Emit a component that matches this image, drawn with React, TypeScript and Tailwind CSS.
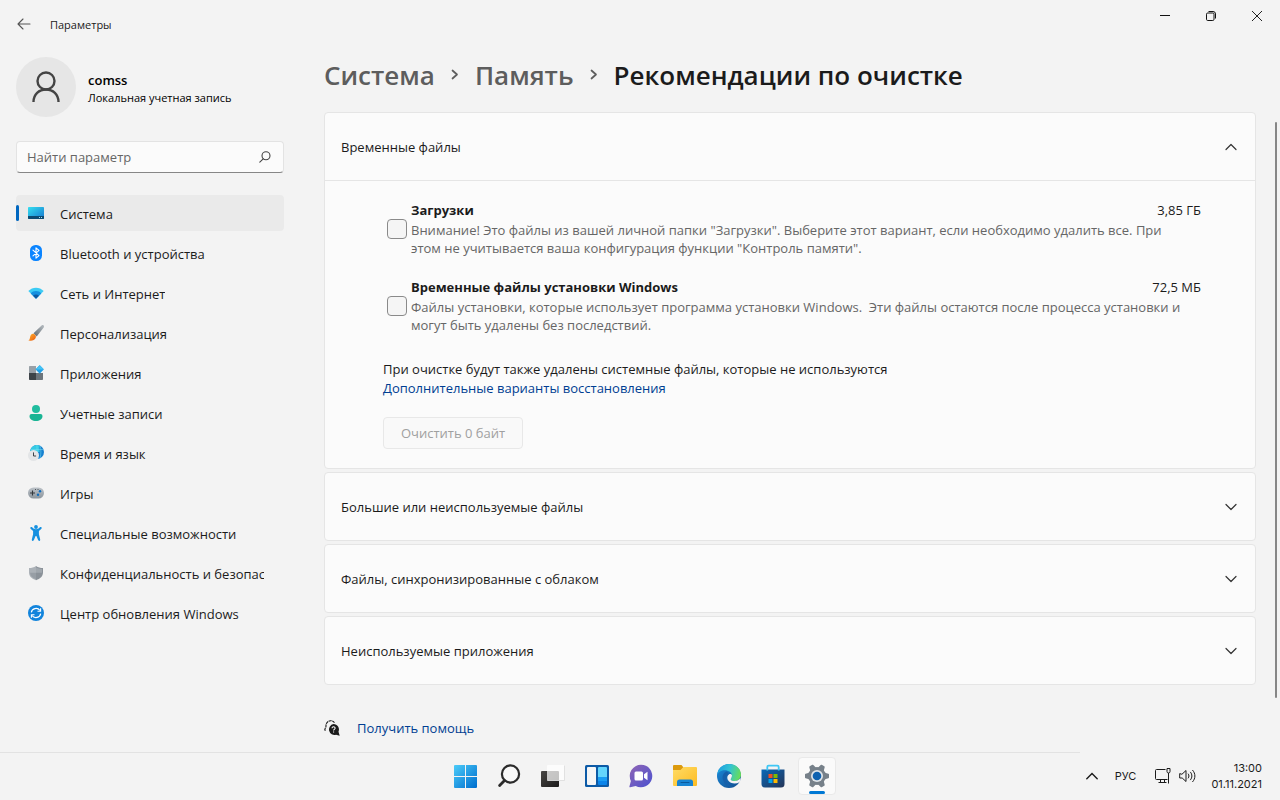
import { useState, ReactNode } from 'react';

interface NavItem {
  label: string;
  icon: ReactNode;
}

function Chevron({ up = false }: { up?: boolean }) {
  return (
    <svg width="12" height="12" viewBox="0 0 12 12" fill="none" stroke="#333" strokeWidth="1.2" strokeLinecap="round" strokeLinejoin="round">
      <path d={up ? 'M1 8.5 6 3.5l5 5' : 'M1 3.5l5 5 5-5'} />
    </svg>
  );
}

function CrumbArrow() {
  return (
    <svg width="8" height="12" viewBox="0 0 8 12" fill="none" stroke="#5d5d5d" strokeWidth="1.7" strokeLinecap="round" strokeLinejoin="round">
      <path d="M1.5 1.5 6 5.500l-4.500 4" />
    </svg>
  );
}

const NAV: NavItem[] = [
  {
    label: 'Система',
    icon: (
      <svg width="16" height="16" viewBox="0 0 16 16">
        <defs>
          <linearGradient id="sys" x1="0" y1="0" x2="1" y2="1">
            <stop offset="0" stopColor="#35dff0" />
            <stop offset="1" stopColor="#1676cf" />
          </linearGradient>
        </defs>
        <rect y="2" width="16" height="12" rx="0.8" fill="url(#sys)" />
        <path d="M0 11h16v2.2a.8.8 0 0 1-.8.8H.8a.8.8 0 0 1-.8-.8z" fill="#0d4a72" />
        <path d="M11 12h1v1h-1zM13 12h1v1h-1z" fill="#9fe3f5" />
      </svg>
    ),
  },
  {
    label: 'Bluetooth и устройства',
    icon: (
      <svg width="16" height="16" viewBox="0 0 16 16">
        <rect x="2" width="12" height="16" rx="5.5" fill="#0a84ff" />
        <path d="M5 5.2 11 10.6 8 13.2V2.8l3 2.6L5 10.8" fill="none" stroke="#fff" strokeWidth="1.1" strokeLinejoin="round" strokeLinecap="round" />
      </svg>
    ),
  },
  {
    label: 'Сеть и Интернет',
    icon: (
      <svg width="16" height="16" viewBox="0 0 16 16">
        <path d="M.3 6C4.500 1.500 11.500 1.500 15.700 6L8 13.700z" fill="#3ccbf4" />
        <path d="M2.700 8.400C5.500 5.300 10.500 5.300 13.300 8.400L8 13.700z" fill="#1590df" />
        <path d="M5 10.700c1.600-1.700 4.400-1.700 6 0l-3 3z" fill="#0c59a4" />
      </svg>
    ),
  },
  {
    label: 'Персонализация',
    icon: (
      <svg width="16" height="16" viewBox="0 0 16 16">
        <defs>
          <linearGradient id="brush" x1="0" y1="1" x2="1" y2="0">
            <stop offset="0" stopColor="#5f6970" />
            <stop offset="1" stopColor="#b8bec3" />
          </linearGradient>
          <linearGradient id="paint" x1="0" y1="0" x2="1" y2="1">
            <stop offset="0" stopColor="#ffb52b" />
            <stop offset="1" stopColor="#ea5a12" />
          </linearGradient>
        </defs>
        <path d="M15.600.4c.6.600.5 1.300.1 2L8.700 11.500 5.500 8.200 13.600.500c.6-.5 1.500-.6 2-.1z" fill="url(#brush)" />
        <path d="M5 8.800c1.200-.2 3 1.400 2.900 2.900-.2 3-3.700 4.500-7.700 3.900 1.600-.9 1.500-2 1.900-3.700.4-1.700 1.300-2.900 2.900-3.100z" fill="url(#paint)" />
      </svg>
    ),
  },
  {
    label: 'Приложения',
    icon: (
      <svg width="16" height="16" viewBox="0 0 16 16">
        <path d="M1.800 1H8v7H1V1.800A.8.800 0 0 1 1.800 1z" fill="#98a0a7" />
        <path d="M1 8h7v7H1.800a.8.800 0 0 1-.8-.8z" fill="#3d4348" />
        <path d="M8 8h7v6.200a.8.800 0 0 1-.8.800H8z" fill="#6c757c" />
        <rect x="8.700" y="1.400" width="6" height="6" rx=".6" transform="rotate(45 11.700 4.400)" fill="#1e9fe8" />
        <path d="M11.700.2 15.900 4.400H7.500z" fill="#43c3f5" />
      </svg>
    ),
  },
  {
    label: 'Учетные записи',
    icon: (
      <svg width="16" height="16" viewBox="0 0 16 16">
        <circle cx="8" cy="4" r="4" fill="#21bd9f" />
        <path d="M3.500 9h9A2 2 0 0 1 14.500 11c0 3.300-3 5-6.500 5s-6.500-1.700-6.500-5a2 2 0 0 1 2-2z" fill="#19b494" />
      </svg>
    ),
  },
  {
    label: 'Время и язык',
    icon: (
      <svg width="16" height="16" viewBox="0 0 16 16">
        <circle cx="9" cy="7" r="7" fill="#1680cf" />
        <path d="M9 0a7 7 0 0 0-7 7h9.500V.5A7 7 0 0 0 9 0z" fill="#35cbe4" />
        <path d="M2.500 4.500h13M9 0v8M12 .6c1.200 4 1.200 8 0 12.500" fill="none" stroke="#7be1f2" strokeWidth=".5" />
        <circle cx="5.500" cy="10.500" r="5.500" fill="#e3e5e7" />
        <path d="M5.500 7.400v3.600h2.600" fill="none" stroke="#3d4247" strokeWidth="1" />
      </svg>
    ),
  },
  {
    label: 'Игры',
    icon: (
      <svg width="16" height="16" viewBox="0 0 16 16">
        <defs>
          <linearGradient id="pad" x1="0" y1="0" x2="0" y2="1">
            <stop offset="0" stopColor="#bcc2c8" />
            <stop offset="1" stopColor="#8c959d" />
          </linearGradient>
        </defs>
        <rect y="2.500" width="16" height="11" rx="5.500" fill="url(#pad)" />
        <path d="M4.500 5.500v5M2 8h5" stroke="#32373c" strokeWidth="1.100" />
        <path d="M7 4h1v1H7zM9.500 4h1v1h-1z" fill="#50585f" />
        <circle cx="12" cy="6.300" r="1.200" fill="#0f6cbd" />
        <circle cx="10" cy="9.700" r="1.200" fill="#0f6cbd" />
      </svg>
    ),
  },
  {
    label: 'Специальные возможности',
    icon: (
      <svg width="16" height="16" viewBox="0 0 16 16" fill="#1590e0">
        <circle cx="8" cy="2" r="1.900" />
        <path d="M2.400 2.400c.5-.7 1.100-.6 1.700-.2C5.200 3.300 6.400 4.200 8 4.200s2.800-.9 3.900-2c.6-.4 1.200-.5 1.700.2.3.6.1 1.100-.4 1.500l-2.300 2v3.300l1.300 5.300c.1.700-.2 1.200-.8 1.400-.7.100-1.100-.2-1.300-.8L8.400 11h-.8l-1.700 4.100c-.2.600-.6.900-1.300.8-.6-.2-.9-.7-.8-1.400l1.300-5.300V5.900l-2.300-2c-.5-.4-.7-.9-.4-1.500z" />
      </svg>
    ),
  },
  {
    label: 'Конфиденциальность и безопасность',
    icon: (
      <svg width="16" height="16" viewBox="0 0 16 16">
        <path d="M8 1c2 1.500 4.500 2 7 2v4.500c0 3.700-2.700 6.200-7 7.700z" fill="#8b9299" />
        <path d="M8 1C6 2.500 3.500 3 1 3v4.500c0 3.700 2.700 6.200 7 7.700z" fill="#abb1b7" />
        <path d="M8 2.300c1.800 1.200 3.800 1.600 6 1.700v3.800H8z" fill="#a0a7ad" />
        <path d="M8 7.800H2C2.200 11 4.500 13 8 14.200z" fill="#979ea5" />
      </svg>
    ),
  },
  {
    label: 'Центр обновления Windows',
    icon: (
      <svg width="16" height="16" viewBox="0 0 16 16">
        <circle cx="8" cy="8" r="8" fill="#1284dc" />
        <path d="M3.300 7.300C3.900 3.300 9.500 2 12 5.500M12.700 8.700C12.100 12.700 6.500 14 4 10.500" fill="none" stroke="#fff" strokeWidth="1.200" />
        <path d="M12.600 3.200v3H9.500M3.400 12.800v-3h3.100" fill="none" stroke="#fff" strokeWidth="1.100" />
      </svg>
    ),
  },
];

const FILES = [
  {
    id: 'downloads',
    title: 'Загрузки',
    size: '3,85 ГБ',
    text: 'Внимание! Это файлы из вашей личной папки "Загрузки". Выберите этот вариант, если необходимо удалить все. При этом не учитывается ваша конфигурация функции "Контроль памяти".',
  },
  {
    id: 'setup',
    title: 'Временные файлы установки Windows',
    size: '72,5 МБ',
    text: 'Файлы установки, которые использует программа установки Windows.\u00a0 Эти файлы остаются после процесса установки и могут быть удалены без последствий.',
  },
];

const SECTIONS = ['Большие или неиспользуемые файлы', 'Файлы, синхронизированные с облаком', 'Неиспользуемые приложения'];

const TASKS: NavItem[] = [
  {
    label: 'Пуск',
    icon: (
      <svg width="24" height="24" viewBox="0 0 24 24">
        <defs>
          <linearGradient id="win" x1="0" y1="0" x2="23" y2="23" gradientUnits="userSpaceOnUse">
            <stop offset="0" stopColor="#4fd0fb" />
            <stop offset="1" stopColor="#0070cf" />
          </linearGradient>
        </defs>
        <path d="M1 2a1 1 0 0 1 1-1h10v11H1zM13 1h10a1 1 0 0 1 1 1v10H13zM1 13h11v11H2a1 1 0 0 1-1-1zM13 13h11v10a1 1 0 0 1-1 1H13z" fill="url(#win)" />
      </svg>
    ),
  },
  {
    label: 'Поиск',
    icon: (
      <svg width="24" height="24" viewBox="0 0 24 24" fill="none" stroke="#2b2b2b" strokeLinecap="round">
        <circle cx="13.500" cy="10" r="8.600" strokeWidth="2.200" fill="#f8f8f8" />
        <path d="M7.500 16.500 2.600 21.500" strokeWidth="2.800" />
      </svg>
    ),
  },
  {
    label: 'Представление задач',
    icon: (
      <svg width="24" height="24" viewBox="0 0 24 24">
        <defs>
          <linearGradient id="dark" x1="0" y1="0" x2="1" y2="1">
            <stop offset="0" stopColor="#474543" />
            <stop offset="1" stopColor="#1c1b1a" />
          </linearGradient>
        </defs>
        <rect x="0" y="7" width="18" height="16" rx="1" fill="url(#dark)" />
        <rect x="6" y="1" width="18" height="16" rx="1" fill="#fff" fillOpacity=".72" />
        <path d="M6.500 16.500h17v-15" fill="none" stroke="#d5d5d5" strokeWidth=".7" />
      </svg>
    ),
  },
  {
    label: 'Виджеты',
    icon: (
      <svg width="24" height="24" viewBox="0 0 24 24">
        <rect y="1" width="24" height="22" rx="1.500" fill="#0c5aa6" />
        <rect x="2" y="3" width="9" height="18" rx="1" fill="#f4f5f6" />
        <path d="M13 4a1 1 0 0 1 1-1h7a1 1 0 0 1 1 1v9h-9z" fill="#63d5fd" />
        <path d="M13 13h9v4h-9z" fill="#199df4" />
        <path d="M13 17h9v3a1 1 0 0 1-1 1h-7a1 1 0 0 1-1-1z" fill="#0a84ea" />
      </svg>
    ),
  },
  {
    label: 'Чат',
    icon: (
      <svg width="24" height="24" viewBox="0 0 24 24">
        <defs>
          <linearGradient id="chat" x1="0" y1="0" x2="1" y2="1">
            <stop offset="0" stopColor="#9166b5" />
            <stop offset="1" stopColor="#4a50cf" />
          </linearGradient>
        </defs>
        <path d="M12 .7a11.300 11.300 0 1 1-5.300 21.300L1.200 23.300c-.6.1-.9-.3-.8-.8L1.900 17A11.300 11.300 0 0 1 12 .7z" fill="url(#chat)" />
        <rect x="5.500" y="7.500" width="8.500" height="9" rx="1.500" fill="#fff" />
        <path d="M15 10.300 18.500 7.700v8.600L15 13.700z" fill="#fff" />
      </svg>
    ),
  },
  {
    label: 'Проводник',
    icon: (
      <svg width="24" height="24" viewBox="0 0 24 24">
        <defs>
          <linearGradient id="folder" x1="0" y1="0" x2="1" y2="1">
            <stop offset="0" stopColor="#ffdc66" />
            <stop offset="1" stopColor="#fdbb22" />
          </linearGradient>
        </defs>
        <path d="M0 2a1 1 0 0 1 1-1h7.500l2 2.500L8 7H0z" fill="#dc9a0d" />
        <path d="M0 6h7.500l3-3H23a1 1 0 0 1 1 1v17a1 1 0 0 1-1 1H1a1 1 0 0 1-1-1z" fill="url(#folder)" />
        <path d="M4 18a2.500 2.500 0 0 1 2.500-2.500h11A2.500 2.500 0 0 1 20 18v4H4z" fill="#1784d3" />
        <path d="M8 18.500h8" stroke="#0a599c" strokeLinecap="round" />
      </svg>
    ),
  },
  {
    label: 'Microsoft Edge',
    icon: (
      <svg width="24" height="24" viewBox="0 0 24 24">
        <defs>
          <linearGradient id="edgeTop" x1="0" y1=".3" x2="1" y2=".5">
            <stop offset="0" stopColor="#1b9de0" />
            <stop offset=".5" stopColor="#32c3d4" />
            <stop offset="1" stopColor="#68dd58" />
          </linearGradient>
          <linearGradient id="edgeLow" x1="0" y1="0" x2="1" y2="1">
            <stop offset="0" stopColor="#1b8dde" />
            <stop offset="1" stopColor="#114a8b" />
          </linearGradient>
        </defs>
        <circle cx="12" cy="12" r="12" fill="url(#edgeLow)" />
        <path d="M0 11.500C.5 5 5.500 0 12 0c7 0 12 5 12 10.500 0 4-3 6.500-6.500 6.500-3.300 0-4.200-1.300-3.600-2.200.7-.9 1.100-1.700 1.100-2.800C15 8.500 11.500 6.300 7.700 6.300 3.500 6.300.5 9 0 11.500z" fill="url(#edgeTop)" />
        <path d="M9.500 7.500C6 9 4.500 13 6.500 17c1.800 4 5.500 6 9 6.300C9 20 7.500 13 12 10.500c0 0-.8-2.300-2.500-3z" fill="#1660aa" />
        <path d="M15 11.500c0 1.300-.4 2.400-1.100 3.300-.6.900.3 2.200 3.600 2.200 2.500 0 4.700-1.200 5.900-3 .4 1.600-.3 3.500-.9 4.200-1.500.8-3.200 1.200-5 1.200-4 0-7.200-2.700-7.200-5.700 0-1.700.9-3 2.200-3.700 1.500-.3 2.500.5 2.500 1.500z" fill="#f3f3f3" />
      </svg>
    ),
  },
  {
    label: 'Microsoft Store',
    icon: (
      <svg width="24" height="24" viewBox="0 0 24 24">
        <defs>
          <linearGradient id="store" x1="0" y1="0" x2="1" y2="1">
            <stop offset="0" stopColor="#0968b8" />
            <stop offset="1" stopColor="#243456" />
          </linearGradient>
        </defs>
        <path d="M.5 5.500h23V20a3.500 3.500 0 0 1-3.500 3.500H4A3.500 3.500 0 0 1 .5 20z" fill="url(#store)" />
        <path d="M6.300 6.500V3a1.300 1.300 0 0 1 1.300-1.300h8.800A1.300 1.300 0 0 1 17.700 3v3.500" fill="none" stroke="#3fc7f5" strokeWidth="1.800" />
        <path d="M7.500 10h4v4h-4z" fill="#f25022" />
        <path d="M12.500 10h4v4h-4z" fill="#7fba00" />
        <path d="M7.500 15h4v4h-4z" fill="#00a4ef" />
        <path d="M12.500 15h4v4h-4z" fill="#ffb900" />
      </svg>
    ),
  },
  {
    label: 'Параметры',
    icon: (
      <svg width="24" height="24" viewBox="0 0 24 24">
        <g fill="#77818a">
          <circle cx="12" cy="12" r="9" />
          <path d="M5 8.500.6 9.700a.8.800 0 0 0-.6.800v3a.8.800 0 0 0 .6.800L5 15.500zM19 8.500l4.400 1.200a.8.800 0 0 1 .6.800v3a.8.800 0 0 1-.6.800L19 15.500z" />
          <path d="M5 8.500.6 9.700a.8.800 0 0 0-.6.800v3a.8.800 0 0 0 .6.800L5 15.500zM19 8.500l4.400 1.200a.8.800 0 0 1 .6.800v3a.8.800 0 0 1-.6.800L19 15.500z" transform="rotate(60 12 12)" />
          <path d="M5 8.500.6 9.700a.8.800 0 0 0-.6.800v3a.8.800 0 0 0 .6.800L5 15.500zM19 8.500l4.400 1.200a.8.800 0 0 1 .6.800v3a.8.800 0 0 1-.6.800L19 15.500z" transform="rotate(120 12 12)" />
        </g>
        <circle cx="12" cy="12" r="6" fill="#dfe4e8" />
        <circle cx="12" cy="12" r="4.300" fill="#0f62b0" />
      </svg>
    ),
  },
];

export default function App() {
  const [open, setOpen] = useState(true);
  const [checked, setChecked] = useState<string[]>([]);

  function toggle(id: string) {
    setChecked(c => (c.includes(id) ? c.filter(x => x !== id) : [...c, id]));
  }

  return (
    <div className="min-h-screen flex flex-col bg-[#f3f3f3] text-[#1b1b1b] text-[13px] leading-5 font-['Open_Sans','Noto_Sans',sans-serif]">
      <header className="h-12 flex items-start justify-between">
        <div className="h-12 flex items-center pl-3">
          <button type="button" aria-label="Назад" className="w-6 h-6 grid place-items-center">
            <svg width="14" height="12" viewBox="0 0 14 12" fill="none" stroke="#555" strokeWidth="1.1" strokeLinecap="round" strokeLinejoin="round">
              <path d="M1 6h12M6 1 1 6l5 5" />
            </svg>
          </button>
          <span className="ml-[14px] pt-0.5 text-[11px]">Параметры</span>
        </div>
        <div className="flex">
          <button type="button" aria-label="Свернуть" className="w-[46px] h-8 grid place-items-center hover:bg-black/5">
            <svg width="10" height="10" viewBox="0 0 10 10" stroke="#111"><path d="M0 4.500h10" /></svg>
          </button>
          <button type="button" aria-label="Восстановить" className="w-[46px] h-8 grid place-items-center hover:bg-black/5">
            <svg width="10" height="10" viewBox="0 0 10 10" fill="none" stroke="#111">
              <rect x=".5" y="2" width="7.500" height="7.500" rx="1.200" />
              <path d="M2.500.5H7a2.500 2.500 0 0 1 2.500 2.500v4.500" />
            </svg>
          </button>
          <button type="button" aria-label="Закрыть" className="w-[46px] h-8 grid place-items-center hover:bg-black/5">
            <svg width="10" height="10" viewBox="0 0 10 10" stroke="#222"><path d="M0 0l10 10M10 0 0 10" /></svg>
          </button>
        </div>
      </header>

      <div className="flex-1 flex">
        <aside className="w-[300px] shrink-0 px-4 pt-[9px]">
          <div className="flex items-center gap-3">
            <div className="size-[60px] rounded-full bg-[#e6e6e6] grid place-items-center">
              <svg width="28" height="32" viewBox="0 0 28 32" fill="none" stroke="#444" strokeWidth="2.400">
                <circle cx="14" cy="10" r="8.500" />
                <path d="M1.500 31C1.500 23.500 7 18.500 14 18.500S26.500 23.500 26.500 31" />
              </svg>
            </div>
            <div className="pt-[3px] text-black">
              <div className="text-[13px] leading-[18px] font-semibold">comss</div>
              <div className="text-[11px] leading-[18px]">Локальная учетная запись</div>
            </div>
          </div>

          <div className="mt-6 h-8 flex items-center rounded-[4px] border border-[#e3e3e3] border-b-[#868686] bg-[#fbfbfb] pl-[10px] pr-3">
            <input aria-label="Найти параметр" placeholder="Найти параметр" className="flex-1 min-w-0 bg-transparent outline-none placeholder:text-[#666]" />
            <svg width="12" height="12" viewBox="0 0 12 12" fill="none" stroke="#444" strokeWidth="1.100" strokeLinecap="round">
              <circle cx="7" cy="4.800" r="4" />
              <path d="M4.200 7.800.8 11.200" />
            </svg>
          </div>

          <nav className="mt-[22px] flex flex-col gap-1">
            {NAV.map((item, i) => (
              <a
                key={item.label}
                href="#"
                className={`relative h-9 flex items-center gap-4 pl-3 pr-5 rounded-[4px] ${i === 0 ? 'bg-[#eaeaea]' : 'hover:bg-[#eaeaea]'}`}
              >
                {i === 0 && <span className="absolute left-0 top-[10px] w-[3px] h-4 rounded-full bg-[#0067c0]" />}
                <span className="shrink-0">{item.icon}</span>
                <span className="pt-0.5 overflow-hidden whitespace-nowrap">{item.label}</span>
              </a>
            ))}
          </nav>
        </aside>

        <main className="flex-1 min-w-0 pl-6 pt-[9px] flex flex-col">
          <h1 className="h-9 flex items-center text-[26px] font-semibold whitespace-nowrap">
            <a href="#" className="text-[#5d5d5d]">Система</a>
            <span className="mx-4"><CrumbArrow /></span>
            <a href="#" className="text-[#5d5d5d]">Память</a>
            <span className="mx-4"><CrumbArrow /></span>
            <span>Рекомендации по очистке</span>
          </h1>

          <div className="flex-1 flex mt-[19px]">
            <div className="flex-1 min-w-0">
              <div className="flex flex-col gap-[3px]">
                <section className="rounded-[4px] border border-[#e5e5e5] bg-[#fbfbfb]">
                  <button type="button" aria-expanded={open} onClick={() => setOpen(!open)} className="w-full h-[67px] px-4 flex items-center justify-between text-left">
                    Временные файлы
                    <span className="mr-[2px]"><Chevron up={open} /></span>
                  </button>
                  {open && (
                    <div className="border-t border-[#e5e5e5] pt-[19px] pb-[19px] pl-[58px] pr-[54px]">
                      <div className="flex flex-col gap-5 pl-1">
                        {FILES.map(f => (
                          <div key={f.id} className="flex items-center gap-1">
                            <input
                              id={f.id}
                              type="checkbox"
                              checked={checked.includes(f.id)}
                              onChange={() => toggle(f.id)}
                              className="size-5 shrink-0 appearance-none rounded-[4px] border border-[#8a8a8a] bg-[#f5f5f5] checked:bg-[#0067c0]"
                            />
                            <div className="flex-1 min-w-0">
                              <div className="flex justify-between leading-[21px]">
                                <label htmlFor={f.id} className="font-bold">{f.title}</label>
                                <span>{f.size}</span>
                              </div>
                              <p className="pr-2 leading-[18px] text-[#666]">{f.text}</p>
                            </div>
                          </div>
                        ))}
                      </div>
                      <p className="mt-[26px] leading-[19px]">При очистке будут также удалены системные файлы, которые не используются</p>
                      <a href="#" className="block leading-[19px] text-[#003e92]">Дополнительные варианты восстановления</a>
                      <button type="button" disabled className="mt-[19px] h-8 w-[140px] rounded-[4px] border border-[#e8e8e8] bg-[#f9f9f9] text-[#a0a0a0]">
                        Очистить 0 байт
                      </button>
                    </div>
                  )}
                </section>

                {SECTIONS.map(s => (
                  <section key={s} className="rounded-[4px] border border-[#e5e5e5] bg-[#fbfbfb]">
                    <button type="button" aria-expanded="false" className="w-full h-[67px] px-4 flex items-center justify-between text-left">
                      {s}
                      <span className="mr-[2px]"><Chevron /></span>
                    </button>
                  </section>
                ))}
              </div>

              <a href="#" className="mt-[33px] inline-flex items-center gap-[17px] text-[#003e92]">
                <svg width="16" height="16" viewBox="0 0 16 16">
                  <path d="M1.300 10.800.8 9.500 2 6.500C1.700 3 4 .8 6.500.7c2 0 3.300.9 4 2.300" fill="none" stroke="#1b1b1b" strokeWidth="1.100" strokeDasharray="3 .6" />
                  <path d="M9.500 4a5.500 5.500 0 0 1 5 7.700l1.200 4-3.700-1A5.500 5.500 0 1 1 9.500 4z" fill="#1b1b1b" />
                  <path d="M8 8.200c0-2 3.200-2 3.100 0-.1 1.200-1.500 1.200-1.500 2.300M9.600 11.500v1.100" fill="none" stroke="#fff" strokeWidth="1.100" />
                </svg>
                Получить помощь
              </a>
            </div>

            <div className="w-6 shrink-0 flex justify-end pr-[3px] pt-[10px] pb-[54px]">
              <div className="w-[2px] rounded-full bg-[#868686]" />
            </div>
          </div>
        </main>
      </div>

      <footer className="h-12 flex flex-col">
        <div className="h-px mr-[200px] bg-[#e2e2e2]" />
        <div className="flex-1 grid grid-cols-[1fr_auto_1fr] items-center pb-px">
          <div />
          <div className="flex gap-[6px] pl-0.5">
            {TASKS.map((t, i) => (
              <button
                key={t.label}
                type="button"
                aria-label={t.label}
                className={`relative size-[38px] grid place-items-center rounded-[4px] border ${i === TASKS.length - 1 ? 'bg-[#fafafa] border-[#e9e9e9]' : 'border-transparent'}`}
              >
                {t.icon}
                {i === TASKS.length - 1 && <span className="absolute bottom-0 w-4 h-[3px] rounded-full bg-[#0078d4]" />}
              </button>
            ))}
          </div>
          <div className="flex items-center justify-end pr-[18px] font-[Inter,sans-serif] text-[11px] leading-4">
            <button type="button" aria-label="Скрытые значки" className="mr-[17px]">
              <svg width="12" height="8" viewBox="0 0 12 8" fill="none" stroke="#1b1b1b" strokeWidth="1.400" strokeLinecap="round"><path d="M.8 6.800 6 1.500l5.200 5.300" /></svg>
            </button>
            <button type="button" className="mr-[19px]">РУС</button>
            <button type="button" aria-label="Сеть и звук" className="flex items-center gap-2 mr-[15px]">
              <svg width="16" height="16" viewBox="0 0 16 16" fill="none" stroke="#1b1b1b">
                <path d="M10.500 1.500h-9a1 1 0 0 0-1 1v8a1 1 0 0 0 1 1h11M5.500 11.500v3M9.500 11.500v3M3.500 14.500h8" />
                <path d="M12 1v2.500a1.500 1.500 0 0 0 3 0V.5h-3zM13.500 5v10.500" />
              </svg>
              <svg width="17" height="14" viewBox="0 0 17 14" fill="none" stroke="#1b1b1b" strokeLinejoin="round" strokeLinecap="round">
                <path d="M.7 5v4h2.500L7 12.500v-11L3.200 5zM9.300 5c.9 1.200.9 2.800 0 4M11.500 3.200c1.900 2.200 1.900 5.400 0 7.600M13.700 1.300c3 3.300 3 8.100 0 11.400" />
              </svg>
            </button>
            <time dateTime="2021-11-01T13:00" className="text-right">
              13:00
              <br />
              01.11.2021
            </time>
          </div>
        </div>
      </footer>
    </div>
  );
}
